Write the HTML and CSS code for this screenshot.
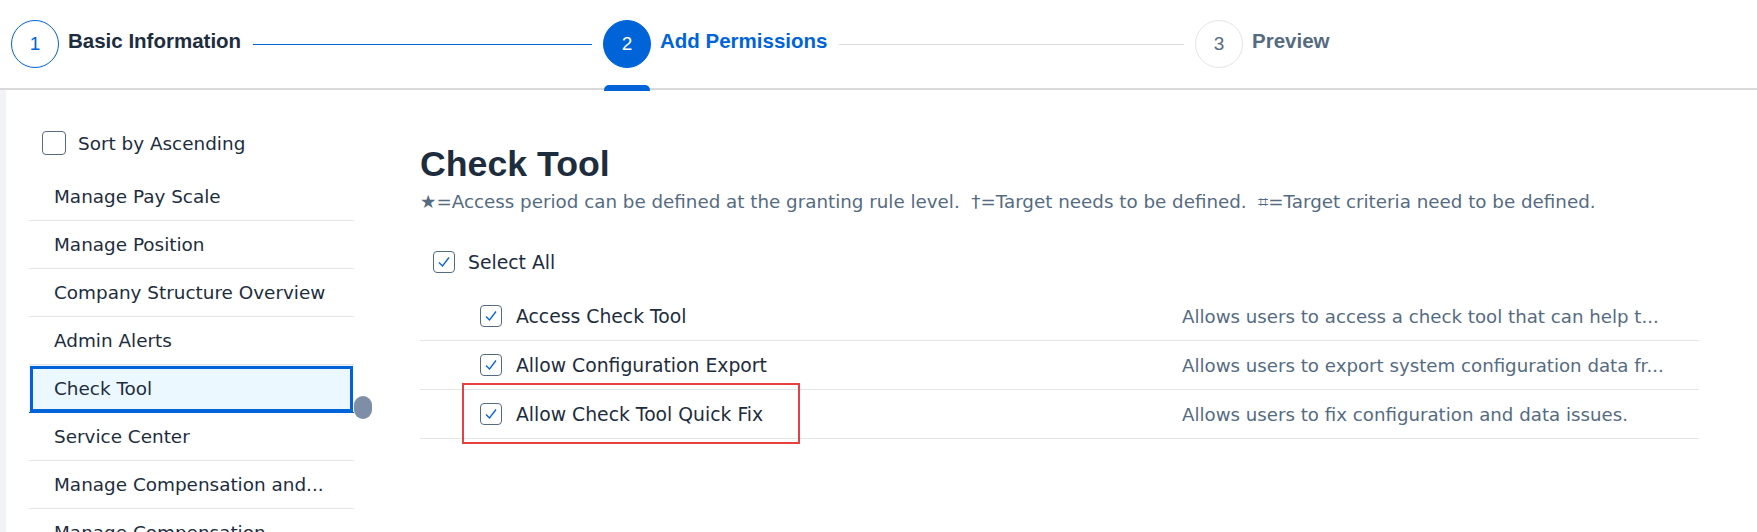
FILE: index.html
```html
<html lang="en">
<head>
  <meta charset="UTF-8" />
  <title>Add Permissions</title>
  <link rel="stylesheet" href="styles.css">
</head>

<body>
  <div class="wizard">
    <div class="step step-done">
      <span class="step-num">1</span>
      <span class="step-title">Basic Information</span>
      <span class="step-line"></span>
    </div>
    <div class="step step-current">
      <span class="step-num">2</span>
      <span class="step-title">Add Permissions</span>
      <span class="step-line"></span>
    </div>
    <div class="step step-next">
      <span class="step-num">3</span>
      <span class="step-title">Preview</span>
    </div>
  </div>

  <div class="page">
    <div class="stripe"></div>

    <div class="sidebar">
      <label class="sort">
        <span class="box"></span>
        Sort by Ascending
      </label>

      <ul class="nav">
        <li class="nav-item">Manage Pay Scale</li>
        <li class="nav-item">Manage Position</li>
        <li class="nav-item">Company Structure Overview</li>
        <li class="nav-item">Admin Alerts</li>
        <li class="nav-item selected">Check Tool</li>
        <li class="nav-item">Service Center</li>
        <li class="nav-item">Manage Compensation and...</li>
        <li class="nav-item">Manage Compensation</li>
      </ul>
      <!-- poignee de la barre de defilement -->
      <span class="scroll-thumb"></span>
    </div>

    <div class="main">
      <h1>Check Tool</h1>
      <p class="legend">★=Access period can be defined at the granting rule level.&nbsp; †=Target needs to be defined.&nbsp; ⌗=Target criteria need to be defined.</p>

      <label class="select-all">
        <span class="box checked"><svg width="20" height="20" viewBox="0 0 20 20"><path d="M5 10.5 L8.5 14 L15 5.5" /></svg></span>
        Select All
      </label>

      <div class="perms">
        <div class="perm">
          <div class="perm-name">
            <span class="box checked"><svg width="20" height="20" viewBox="0 0 20 20"><path d="M5 10.5 L8.5 14 L15 5.5" /></svg></span>
            Access Check Tool
          </div>
          <div class="perm-desc">Allows users to access a check tool that can help t...</div>
        </div>
        <div class="perm">
          <div class="perm-name">
            <span class="box checked"><svg width="20" height="20" viewBox="0 0 20 20"><path d="M5 10.5 L8.5 14 L15 5.5" /></svg></span>
            Allow Configuration Export
          </div>
          <div class="perm-desc">Allows users to export system configuration data fr...</div>
        </div>
        <div class="perm">
          <div class="perm-name">
            <span class="box checked"><svg width="20" height="20" viewBox="0 0 20 20"><path d="M5 10.5 L8.5 14 L15 5.5" /></svg></span>
            Allow Check Tool Quick Fix
            <span class="highlight"></span>
          </div>
          <div class="perm-desc">Allows users to fix configuration and data issues.</div>
        </div>
      </div>
    </div>
  </div>
</body>
</html>
```

FILE: styles.css
```css
body {
  margin: 0;
  height: 532px;
  overflow: hidden;
  background: #fff;
  color: #1d2d3e;
  font-family: "DejaVu Sans", sans-serif;
}

/* etapes de l'assistant */
.wizard {
  height: 88px;
  border-bottom: 2px solid #d9d9d9;
  display: flex;
  align-items: center;
  padding-left: 11px;
}

.step {
  display: flex;
  align-items: center;
  width: 592px;
  flex: none;
}

.step:last-child {
  width: auto;
}

.step-num {
  width: 46px;
  height: 46px;
  border: 1px solid #e5e5e5;
  border-radius: 50%;
  display: flex;
  align-items: center;
  justify-content: center;
  flex: none;
  font: 19px "Liberation Sans", sans-serif;
}

.step-title {
  margin: 0 0 6px 9px;
  font: bold 20.5px "Liberation Sans", sans-serif;
  white-space: nowrap;
}

.step-line {
  flex: 1;
  height: 1px;
  margin: 0 11px 0 12px;
  background: #dcdcdc;
}

.step-done .step-num {
  border-color: #0064d9;
  color: #0064d9;
}

.step-done .step-line {
  background: #0064d9;
}

.step-current .step-num {
  position: relative;
  background: #0064d9;
  border-color: #0064d9;
  color: #fff;
}

.step-current .step-num::after {
  content: "";
  position: absolute;
  left: 0;
  top: 64px;
  width: 46px;
  height: 6px;
  border-radius: 5px 5px 0 0;
  background: #0064d9;
}

.step-current .step-title {
  color: #0064d9;
}

.step-next .step-num,
.step-next .step-title {
  color: #556b82;
}

/* contenu */
.page {
  display: flex;
  height: 442px;
}

.stripe {
  width: 6px;
  flex: none;
  background: #f1f3f6;
}

.sidebar {
  position: relative;
  flex: none;
  width: 325px;
  margin-left: 23px;
  padding-top: 41px;
}

.box {
  width: 22px;
  height: 22px;
  box-sizing: border-box;
  border: 1px solid #556b82;
  border-radius: 4px;
  background: #fff;
  display: flex;
  align-items: center;
  justify-content: center;
  flex: none;
}

.box svg path {
  fill: none;
  stroke: #0064d9;
  stroke-width: 1.3;
}

.sort {
  display: flex;
  align-items: center;
  gap: 12px;
  height: 24px;
  padding-left: 13px;
  margin-bottom: 18px;
  font-size: 18.4px;
}

.sort .box {
  width: 24px;
  height: 24px;
}

.nav {
  list-style: none;
  margin: 0;
  padding: 0;
}

.nav-item {
  height: 48px;
  box-sizing: border-box;
  border-bottom: 1px solid #e5e5e5;
  padding-left: 25px;
  display: flex;
  align-items: center;
  font-size: 18.4px;
  white-space: nowrap;
}

.nav-item.selected {
  background: #ebf8ff;
  border-bottom-color: #0064d9;
  outline: 3px solid #0064d9;
  outline-offset: -4px;
}

.scroll-thumb {
  position: absolute;
  left: 325px;
  top: 306px;
  width: 18px;
  height: 23px;
  border-radius: 9px;
  background: #7d8ea6;
}

.main {
  flex: none;
  width: 1279px;
  margin-left: 66px;
  padding-top: 54px;
}

.main h1 {
  margin: 0;
  font: bold 35.7px/40px "Liberation Sans", sans-serif;
}

.legend {
  margin: 6px 0 0;
  font-size: 18.3px;
  line-height: 24px;
  color: #556b82;
  white-space: nowrap;
}

.select-all {
  display: flex;
  align-items: center;
  gap: 13px;
  height: 44px;
  margin-top: 26px;
  padding-left: 13px;
  font-size: 18.8px;
}

.perms {
  margin-top: 8px;
}

.perm {
  display: grid;
  grid-template-columns: 762px 1fr;
  height: 49px;
  box-sizing: border-box;
  border-bottom: 1px solid #e5e5e5;
  font-size: 18.8px;
}

.perm-name {
  position: relative;
  display: flex;
  align-items: center;
  gap: 14px;
  padding-left: 60px;
  white-space: nowrap;
}

.perm-desc {
  display: flex;
  align-items: center;
  color: #556b82;
  font-size: 18.2px;
  white-space: nowrap;
  overflow: hidden;
}

.highlight {
  position: absolute;
  left: 42px;
  top: -7px;
  width: 338px;
  height: 61px;
  box-sizing: border-box;
  border: 2px solid #e8403d;
}
```
